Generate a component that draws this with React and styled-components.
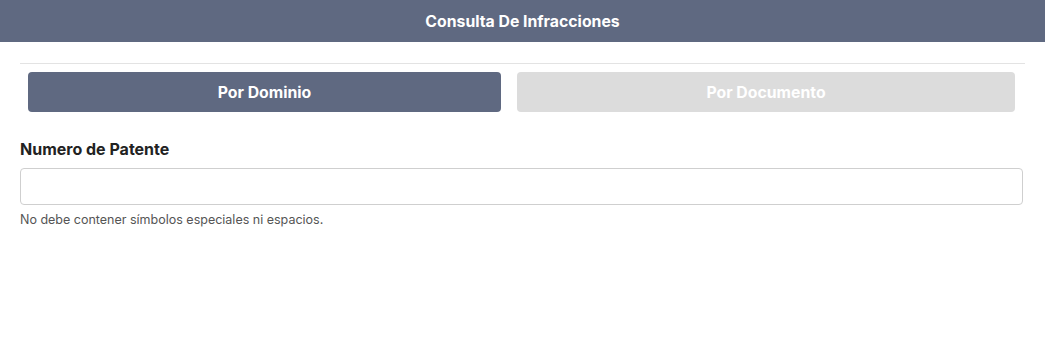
import React from "react";
import styled, { createGlobalStyle } from "styled-components";

const GlobalStyle = createGlobalStyle`
  body {
    margin: 0;
    background: #fff;
    font-family: Inter, "Helvetica Neue", Arial, sans-serif;
    color: #222;
  }
`;

const Page = styled.div`
  width: 1045px;
`;

const Header = styled.header`
  height: 42px;
  background-color: #5f6981;
  display: flex;
  align-items: center;
  justify-content: center;
`;

const HeaderTitle = styled.h1`
  margin: 0;
  font-size: 15.8px;
  font-weight: 700;
  color: #fff;
`;

const Content = styled.div`
  padding: 21px 20px 0 20px;
`;

const Divider = styled.hr`
  margin: 0;
  border: none;
  height: 1px;
  background-color: #e3e3e3;
  width: 1005px;
`;

const Tabs = styled.div`
  display: grid;
  grid-template-columns: 473px 498px;
  gap: 16px;
  padding: 8px 0 0 8px;
`;

const TabButton = styled.button`
  height: 40px;
  border: none;
  border-radius: 4px;
  background-color: ${({ active }) => (active ? "#5f6981" : "#dcdcdc")};
  color: #fff;
  font-family: inherit;
  font-size: 15.8px;
  font-weight: 700;
  cursor: pointer;
`;

const Field = styled.div`
  margin-top: 27px;
  display: flex;
  flex-direction: column;
`;

const Label = styled.label`
  font-size: 16px;
  font-weight: 700;
  color: #222;
  line-height: 20px;
`;

const Input = styled.input`
  margin-top: 9px;
  width: 1003px;
  height: 37px;
  box-sizing: border-box;
  border: 1px solid #cfcfcf;
  border-radius: 4px;
  font-family: inherit;
  font-size: 14px;
  padding: 0 10px;
`;

const Help = styled.small`
  margin-top: 7px;
  font-size: 12.5px;
  color: #555;
`;

export default function App() {
  return (
    <Page>
      <GlobalStyle />
      <Header>
        <HeaderTitle>Consulta De Infracciones</HeaderTitle>
      </Header>
      <Content>
        <Divider />
        <Tabs>
          <TabButton active>Por Dominio</TabButton>
          <TabButton>Por Documento</TabButton>
        </Tabs>
        <Field>
          <Label>Numero de Patente</Label>
          <Input type="text" />
          <Help>No debe contener símbolos especiales ni espacios.</Help>
        </Field>
      </Content>
    </Page>
  );
}
